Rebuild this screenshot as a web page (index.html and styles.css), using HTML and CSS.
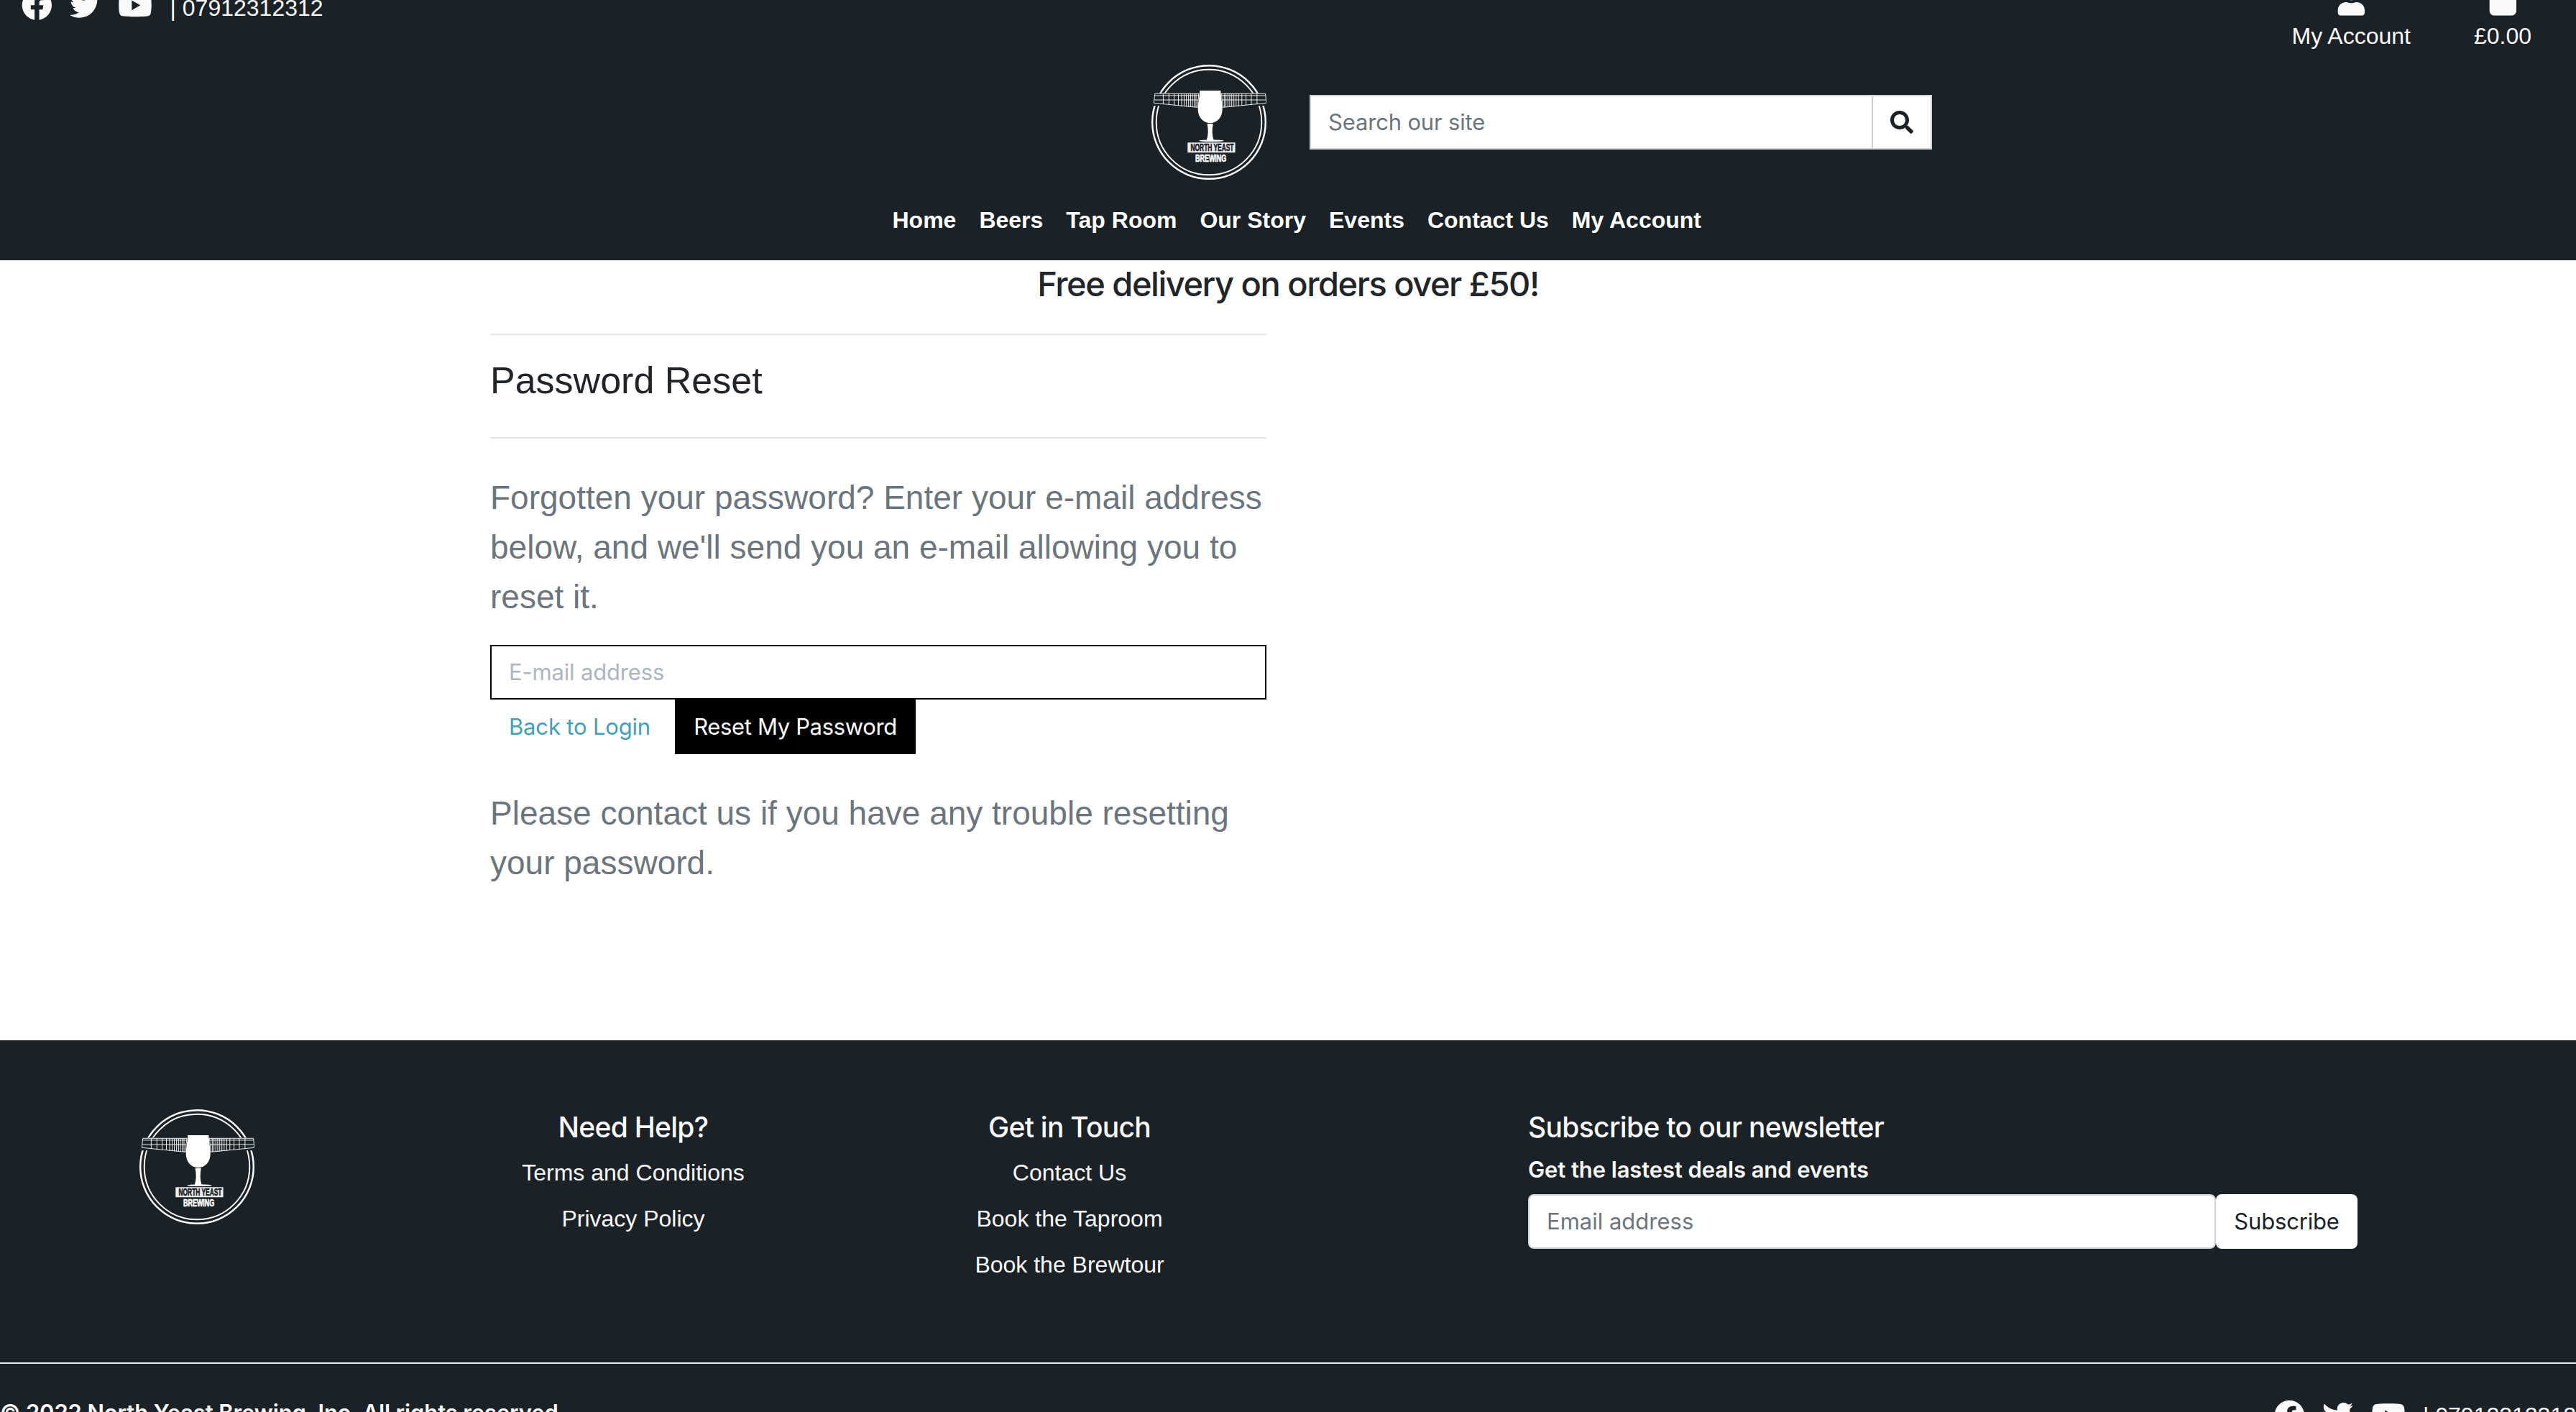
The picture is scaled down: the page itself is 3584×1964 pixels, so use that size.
FILE: index.html
```html
<!DOCTYPE html>
<html lang="en">
<head>
<meta charset="utf-8">
<title>North Yeast Brewing</title>
<link rel="stylesheet" href="styles.css">
</head>
<body>
<svg class="defs" width="0" height="0" aria-hidden="true">
  <symbol id="facebook" viewBox="0 0 512 512"><path d="M504 256C504 119 393 8 256 8S8 119 8 256c0 123.780 90.690 226.380 209.250 245V327.690h-63V256h63v-54.640c0-62.150 37-96.480 93.670-96.480 27.140 0 55.520 4.840 55.520 4.840v61h-31.280c-30.800 0-40.410 19.120-40.410 38.730V256h68.780l-11 71.690h-57.780V501C413.310 482.380 504 379.780 504 256z"/></symbol>
  <symbol id="twitter" viewBox="0 0 512 512"><path d="M459.370 151.716c.325 4.548.325 9.097.325 13.645 0 138.720-105.583 298.558-298.558 298.558-59.452 0-114.680-17.219-161.137-47.106 8.447.974 16.568 1.299 25.340 1.299 49.055 0 94.213-16.568 130.274-44.832-46.132-.975-84.792-31.188-98.112-72.772 6.498.974 12.995 1.624 19.818 1.624 9.421 0 18.843-1.300 27.614-3.573-48.081-9.747-84.143-51.980-84.143-102.985v-1.299c13.969 7.797 30.214 12.670 47.431 13.319-28.264-18.843-46.781-51.005-46.781-87.391 0-19.492 5.197-37.360 14.294-52.954 51.655 63.675 129.300 105.258 216.365 109.807-1.624-7.797-2.599-15.918-2.599-24.040 0-57.828 46.782-104.934 104.934-104.934 30.213 0 57.502 12.670 76.670 33.137 23.715-4.548 46.456-13.320 66.599-25.340-7.798 24.366-24.366 44.833-46.132 57.827 21.117-2.273 41.584-8.122 60.426-16.243-14.292 20.791-32.161 39.308-52.628 54.253z"/></symbol>
  <symbol id="youtube" viewBox="0 0 576 512"><path d="M549.655 124.083c-6.281-23.650-24.787-42.276-48.284-48.597C458.781 64 288 64 288 64S117.220 64 74.629 75.486c-23.497 6.322-42.003 24.947-48.284 48.597-11.412 42.867-11.412 132.305-11.412 132.305s0 89.438 11.412 132.305c6.281 23.650 24.787 41.500 48.284 47.821C117.220 448 288 448 288 448s170.780 0 213.371-11.486c23.497-6.321 42.003-24.171 48.284-47.821 11.412-42.867 11.412-132.305 11.412-132.305s0-89.438-11.412-132.305zm-317.510 213.508V175.185l142.739 81.205-142.739 81.201z"/></symbol>
  <symbol id="user" viewBox="0 0 448 512"><path d="M224 256c70.700 0 128-57.300 128-128S294.700 0 224 0 96 57.300 96 128s57.300 128 128 128zm89.600 32h-16.700c-22.200 10.200-46.900 16-72.900 16s-50.600-5.800-72.900-16h-16.700C60.200 288 0 348.200 0 422.400V464c0 26.500 21.500 48 48 48h352c26.500 0 48-21.500 48-48v-41.600c0-74.200-60.200-134.400-134.400-134.400z"/></symbol>
  <symbol id="bag" viewBox="0 0 448 512"><path d="M352 160v-32C352 57.420 294.579 0 224 0 153.420 0 96 57.420 96 128v32H0v272c0 44.183 35.817 80 80 80h288c44.183 0 80-35.817 80-80V160h-96zm-192-32c0-35.290 28.710-64 64-64s64 28.710 64 64v32H160v-32z"/></symbol>
  <symbol id="search" viewBox="0 0 512 512"><path d="M505 442.700L405.300 343c-4.500-4.500-10.600-7-17-7H372c27.600-35.300 44-79.700 44-128C416 93.100 322.900 0 208 0S0 93.100 0 208s93.100 208 208 208c48.300 0 92.700-16.400 128-44v16.300c0 6.400 2.500 12.500 7 17l99.700 99.700c9.400 9.400 24.600 9.400 33.900 0l28.300-28.300c9.400-9.400 9.400-24.600.1-34zM208 336c-70.700 0-128-57.200-128-128 0-70.700 57.200-128 128-128 70.700 0 128 57.200 128 128 0 70.700-57.200 128-128 128z"/></symbol>
  <symbol id="neck" viewBox="0 0 160 160"><path fill="none" stroke="#fff" stroke-width=".9" d="M4.700 40.300H66M4.500 42.900H66M4.300 49H65M4.700 40.300 3.400 53.300 64 59.300M16.400 40v15M24.300 40v16M31.700 40v16.500M37.500 40v17M42 40v18M45.500 40v18M48.600 40v18.500M51.600 40v18.500M54.400 40v19M57 40v19M59.600 40v19M62 40v19M65.800 40 64 59.500"/></symbol>
  <symbol id="logo" viewBox="0 0 160 160">
    <g fill="none" stroke="#fff"><circle cx="80" cy="80" r="78.800" stroke-width="2.400"/><circle cx="80" cy="80" r="73.300" stroke-width="1.900"/></g>
    <path fill="#1a2127" d="M0 39.400h160v17.800H0z"/>
    <use href="#neck" width="160" height="160"/>
    <use href="#neck" width="160" height="160" transform="matrix(-1 0 0 1 163.300 0)"/>
    <path fill="#fff" d="M67.300 36h29c1 12 2.400 19 2.400 26 0 11-7.500 19.200-17 19.200S64.700 73 64.700 62c0-7 1.600-14 2.600-26zM77.600 82h8.200c-1.600 8-1.600 16 .8 23h-9.800c2.400-7 2.400-15 .8-23z"/>
    <ellipse cx="83.500" cy="105.700" rx="17.300" ry="1.400" fill="#fff"/>
    <path fill="#eee" d="M50.300 108.300h66.300v14H50.300z"/>
    <text class="logo-name" x="54.500" y="120.200" textLength="60" lengthAdjust="spacingAndGlyphs">NORTH YEAST</text>
    <text class="logo-sub" x="61" y="134.600" textLength="43.300" lengthAdjust="spacingAndGlyphs">BREWING</text>
  </symbol>
</svg>

<header class="header">
  <div class="topbar">
    <div class="social">
      <svg class="icon"><use href="#facebook"/></svg>
      <svg class="icon"><use href="#twitter"/></svg>
      <svg class="icon wide"><use href="#youtube"/></svg>
      <span class="phone">| 07912312312</span>
    </div>
    <div class="account">
      <a class="account-item"><svg class="icon"><use href="#user"/></svg><span>My Account</span></a>
      <a class="account-item"><svg class="icon"><use href="#bag"/></svg><span>£0.00</span></a>
    </div>
  </div>
  <div class="brand-row">
    <svg class="logo"><use href="#logo"/></svg>
    <div class="search">
      <div class="search-field"><span class="ui">Search our site</span></div>
      <div class="search-button"><svg><use href="#search"/></svg></div>
    </div>
  </div>
  <nav class="nav"><a>Home</a><a>Beers</a><a>Tap Room</a><a>Our Story</a><a>Events</a><a>Contact Us</a><a>My Account</a></nav>
</header>

<main class="main">
  <h4 class="banner">Free delivery on orders over £50!</h4>
  <section class="reset">
    <h3 class="title">Password Reset</h3>
    <p class="copy">Forgotten your password? Enter your e-mail address below, and we'll send you an e-mail allowing you to reset it.</p>
    <div class="email"><span class="ui">E-mail address</span></div>
    <div class="actions">
      <a class="back"><span class="ui">Back to Login</span></a>
      <a class="submit"><span class="ui">Reset My Password</span></a>
    </div>
    <p class="copy">Please contact us if you have any trouble resetting your password.</p>
  </section>
</main>

<footer class="footer">
  <div class="footer-main">
    <svg class="logo"><use href="#logo"/></svg>
    <div class="links help"><h5>Need Help?</h5><a>Terms and Conditions</a><a>Privacy Policy</a></div>
    <div class="links touch"><h5>Get in Touch</h5><a>Contact Us</a><a>Book the Taproom</a><a>Book the Brewtour</a></div>
    <div class="newsletter">
      <h5>Subscribe to our newsletter</h5>
      <p>Get the lastest deals and events</p>
      <div class="subscribe">
        <div class="subscribe-field"><span class="ui">Email address</span></div>
        <div class="subscribe-button"><span class="ui">Subscribe</span></div>
      </div>
    </div>
  </div>
  <div class="footer-bottom">
    <span>© 2022 North Yeast Brewing, Inc. All rights reserved.</span>
    <div class="social">
      <svg class="icon"><use href="#facebook"/></svg>
      <svg class="icon"><use href="#twitter"/></svg>
      <svg class="icon wide"><use href="#youtube"/></svg>
      <span class="phone">| 07912312312</span>
    </div>
  </div>
</footer>
</body>
</html>
```
FILE: styles.css
```css
* { box-sizing: border-box; }
html, body { height: 100%; overflow: hidden; }
body {
  margin: 0;
  background: #fff;
  color: #212529;
  font: 32px/48px "Liberation Sans", Arial, sans-serif;
}
h3, h4, h5, p { margin: 0; font-weight: 500; }
span, a { white-space: nowrap; }
.defs { display: block; }
.ui { font-family: Inter, sans-serif; font-size: 31px; letter-spacing: -.17px; }
.logo { flex: none; width: 160px; height: 160px; }
.logo-name, .logo-sub { font: bold 14px "Liberation Sans", Arial, sans-serif; stroke-width: .7px; }
.logo-name { fill: #1a2127; stroke: #1a2127; }
.logo-sub { fill: #fff; stroke: #fff; }

/* Header */
.header { height: 362px; background: #1a2127; color: #fafafa; }
.topbar { display: flex; justify-content: space-between; height: 90px; }
.icon { flex: none; width: 42.67px; height: 42.67px; fill: #fafafa; }
.icon.wide { width: 48px; }
.social { display: flex; gap: 24.5px; margin: -13.6px 0 0 29.8px; }
.phone { margin-top: .6px; }
.account { display: flex; margin-right: 62px; gap: 88px; }
.account-item { display: flex; flex-direction: column; align-items: center; margin-top: -21px; }
.account-item span { margin-top: 4.3px; }
.brand-row { display: flex; align-items: center; gap: 60px; padding-left: 1602px; }
.search { display: flex; width: 866px; height: 76px; border: 2px solid #ced4da; background: #fff; }
.search-field { flex: 1; padding: 12px 24px; color: #6c757d; }
.search-button { display: flex; align-items: center; justify-content: center; width: 82px; border-left: 2px solid #ced4da; }
.search-button svg { width: 32px; height: 32px; fill: #1a2127; }
.nav { display: flex; gap: 32px; margin-top: 32px; padding-left: 1241.5px; color: #fff; font-weight: bold; }

/* Password reset */
.main { height: 1085px; }
.banner { padding-top: 4px; text-align: center; font: 500 47px/58px Inter, sans-serif; letter-spacing: -1.48px; }
.reset { width: 1080px; margin: 40px 0 0 682px; }
.title { height: 146px; padding-top: 30px; border: solid #e5e5e5; border-width: 2px 0; font-size: 52px; font-weight: 400; line-height: 67px; }
.copy { padding-top: 48px; color: #6c757d; font-size: 46px; font-weight: 400; line-height: 69px; }
.email { height: 76px; margin-top: 32px; padding: 12px 24px; border: 2px solid #000; color: #adb5c2; }
.actions { display: flex; height: 76px; }
.back { width: 257px; padding: 14px 26px; color: #45a0b6; }
.submit { width: 335px; padding: 14px 0; background: #000; color: #fff; text-align: center; }
.submit .ui { letter-spacing: -.35px; }

/* Footer */
.footer { height: 517px; background: #1a2127; color: #fafafa; }
.footer-main { display: flex; height: 448px; padding: 96px 0 0 194px; }
.links { display: flex; flex-direction: column; align-items: center; padding-top: 1px; }
.links a { height: 64px; }
h5 { height: 63px; font: 500 39px/48px Inter, sans-serif; letter-spacing: -.75px; }
.help { width: 608px; margin-left: 223px; }
.touch { width: 606px; }
.newsletter { width: 1154px; margin-left: 335px; padding-top: 1px; }
.newsletter h5 { letter-spacing: -.67px; }
.newsletter p { margin-top: -4px; font: 600 31px/48px Inter, sans-serif; letter-spacing: -.1px; }
.subscribe { display: flex; margin-top: 10px; }
.subscribe-field { width: 957px; height: 76px; padding: 12px 24px; border: 2px solid #ced4da; border-radius: 8px; background: #fff; color: #6c757d; }
.subscribe-field .ui { letter-spacing: 0; }
.subscribe-button { width: 197px; height: 76px; padding: 14px 0; border-radius: 8px; background: #fff; color: #1a2127; text-align: center; }
.footer-bottom { display: flex; justify-content: space-between; padding-top: 44px; border-top: 2px solid #e8e8e8; font: 600 31px/48px Inter, sans-serif; letter-spacing: -.13px; }
.footer-bottom .social { margin: 6px 0 0 0; letter-spacing: 0; }
.footer-bottom .phone { margin-top: -2px; font: 32px/48px "Liberation Sans", Arial, sans-serif; }
```
